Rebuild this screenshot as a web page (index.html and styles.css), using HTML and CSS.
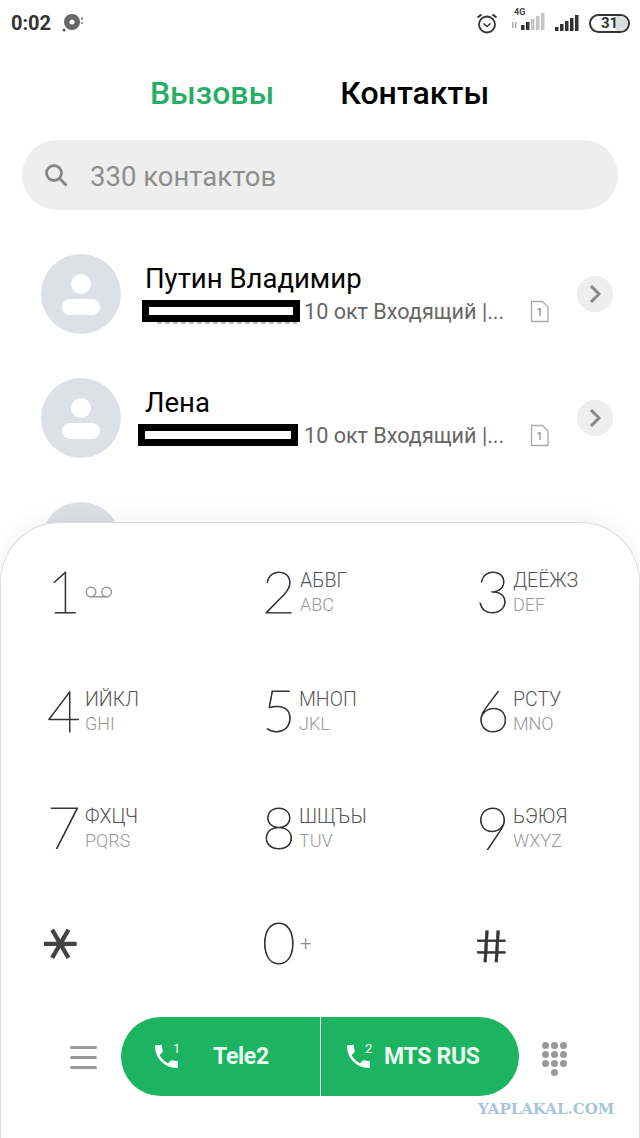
FILE: index.html
```html
<!DOCTYPE html>
<html lang="ru">
<head>
    <meta charset="UTF-8">
    <meta name="viewport" content="width=device-width, initial-scale=1.0">
    <title>Вызовы</title>
    <link rel="stylesheet" href="styles.css">
</head>
<body>
    <div class="screen">
        <div class="status-bar">
            <div class="status-left">
                <span class="clock">0:02</span>
                <svg class="disc-icon" width="22" height="20" viewBox="0 0 22 20">
                    <circle cx="10" cy="9" r="8" fill="#666"/>
                    <circle cx="10" cy="9" r="2.5" fill="#fff"/>
                    <circle cx="2" cy="17" r="1.5" fill="#555"/>
                    <rect x="19" y="4" width="2" height="3" fill="#999"/>
                    <rect x="19" y="9" width="2" height="2" fill="#999"/>
                </svg>
            </div>
            <div class="status-right">
                <svg class="alarm-icon" width="22" height="22" viewBox="0 0 22 22" fill="none" stroke="#333">
                    <circle cx="11" cy="12.5" r="8" stroke-width="1.8"/>
                    <path d="M7.5 11.5l3.5 3 3.5-3" stroke-width="1.6"/>
                    <path d="M1.5 5.5l4-3M20.500 5.500l-4-3" stroke-width="2"/>
                </svg>
                <div class="network">
                    <span class="net-label">4G</span>
                    <svg width="35" height="18" viewBox="0 0 35 18">
                        <rect x="0" y="9" width="1.500" height="6" fill="#aaa"/>
                        <rect x="3" y="9" width="1.500" height="6" fill="#aaa"/>
                        <rect x="9" y="12" width="3.500" height="5" fill="#333"/>
                        <rect x="14" y="9" width="3.500" height="8" fill="#333"/>
                        <rect x="19" y="6" width="3.500" height="11" fill="#c4c4c4"/>
                        <rect x="24" y="3" width="3.500" height="14" fill="#c4c4c4"/>
                        <rect x="29" y="0" width="3.500" height="17" fill="#c4c4c4"/>
                    </svg>
                </div>
                <svg class="signal-icon" width="25" height="18" viewBox="0 0 25 18" fill="#333">
                    <rect x="0" y="13" width="3.500" height="4"/>
                    <rect x="5" y="10" width="3.500" height="7"/>
                    <rect x="10" y="7" width="3.500" height="10"/>
                    <rect x="15" y="4" width="3.500" height="13"/>
                    <rect x="20" y="1" width="3.500" height="16"/>
                </svg>
                <div class="battery"><span class="battery-level"></span><span class="battery-text">31</span></div>
            </div>
        </div>

        <div class="tabs">
            <div class="tab tab-active">Вызовы</div>
            <div class="tab">Контакты</div>
        </div>

        <div class="search">
            <svg width="24" height="24" viewBox="0 0 24 24" fill="none" stroke="#888" stroke-width="2.800">
                <circle cx="10" cy="10" r="7.500"/>
                <path d="M15.500 15.500l7 7"/>
            </svg>
            <span class="search-text">330 контактов</span>
        </div>

        <div class="list">
            <div class="row">
                <svg class="avatar" width="80" height="80" viewBox="0 0 80 80">
                    <circle cx="40" cy="40" r="40" fill="#dde0e5"/>
                    <circle cx="40" cy="30" r="10" fill="#fff"/>
                    <rect x="21" y="45" width="38" height="16" rx="8" fill="#fff"/>
                </svg>
                <div class="info">
                    <div class="name">Путин Владимир</div>
                    <div class="sub">
                        <div class="redact redact-peek"></div>
                        <span class="sub-text">10 окт Входящий |...</span>
                        <svg class="sim" width="20" height="23" viewBox="0 0 20 23">
                            <path d="M1.500 1.500h11l5.500 5.500v14.500h-16.500z" fill="none" stroke="#aaa" stroke-width="1.300"/>
                            <text x="9.500" y="16" class="sim-num">1</text>
                        </svg>
                    </div>
                </div>
                <div class="more">
                    <svg width="14" height="20" viewBox="0 0 14 20" fill="none" stroke="#888" stroke-width="3"><path d="M3 2l8 8-8 8"/></svg>
                </div>
            </div>
            <div class="row">
                <svg class="avatar" width="80" height="80" viewBox="0 0 80 80">
                    <circle cx="40" cy="40" r="40" fill="#dde0e5"/>
                    <circle cx="40" cy="30" r="10" fill="#fff"/>
                    <rect x="21" y="45" width="38" height="16" rx="8" fill="#fff"/>
                </svg>
                <div class="info">
                    <div class="name">Лена</div>
                    <div class="sub">
                        <div class="redact redact-wide"></div>
                        <span class="sub-text">10 окт Входящий |...</span>
                        <svg class="sim" width="20" height="23" viewBox="0 0 20 23">
                            <path d="M1.500 1.500h11l5.500 5.500v14.500h-16.500z" fill="none" stroke="#aaa" stroke-width="1.300"/>
                            <text x="9.500" y="16" class="sim-num">1</text>
                        </svg>
                    </div>
                </div>
                <div class="more">
                    <svg width="14" height="20" viewBox="0 0 14 20" fill="none" stroke="#888" stroke-width="3"><path d="M3 2l8 8-8 8"/></svg>
                </div>
            </div>
            <div class="row">
                <svg class="avatar" width="80" height="80" viewBox="0 0 80 80">
                    <circle cx="40" cy="40" r="40" fill="#dde0e5"/>
                </svg>
                <div class="info">
                    <div class="name">С</div>
                </div>
            </div>
        </div>

        <div class="dialer">
            <div class="keys">
                <div class="key">
                    <span class="digit">1</span>
                    <svg class="voicemail" width="28" height="12" viewBox="0 0 28 12" fill="none" stroke="#999" stroke-width="1.500">
                        <circle cx="6" cy="6" r="4.800"/>
                        <circle cx="21.500" cy="6" r="4.800"/>
                        <path d="M6 10.800h15.500"/>
                    </svg>
                </div>
                <div class="key">
                    <span class="digit">2</span>
                    <div class="letters"><span class="letters-ru">АБВГ</span><span class="letters-en">ABC</span></div>
                </div>
                <div class="key">
                    <span class="digit">3</span>
                    <div class="letters"><span class="letters-ru">ДЕЁЖЗ</span><span class="letters-en">DEF</span></div>
                </div>
                <div class="key">
                    <span class="digit">4</span>
                    <div class="letters"><span class="letters-ru">ИЙКЛ</span><span class="letters-en">GHI</span></div>
                </div>
                <div class="key">
                    <span class="digit">5</span>
                    <div class="letters"><span class="letters-ru">МНОП</span><span class="letters-en">JKL</span></div>
                </div>
                <div class="key">
                    <span class="digit">6</span>
                    <div class="letters"><span class="letters-ru">РСТУ</span><span class="letters-en">MNO</span></div>
                </div>
                <div class="key">
                    <span class="digit">7</span>
                    <div class="letters"><span class="letters-ru">ФХЦЧ</span><span class="letters-en">PQRS</span></div>
                </div>
                <div class="key">
                    <span class="digit">8</span>
                    <div class="letters"><span class="letters-ru">ШЩЪЫ</span><span class="letters-en">TUV</span></div>
                </div>
                <div class="key">
                    <span class="digit">9</span>
                    <div class="letters"><span class="letters-ru">ЬЭЮЯ</span><span class="letters-en">WXYZ</span></div>
                </div>
                <div class="key">
                    <span class="digit symbol star">∗</span>
                </div>
                <div class="key">
                    <span class="digit">0</span>
                    <span class="plus">+</span>
                </div>
                <div class="key">
                    <span class="digit symbol hash">#</span>
                </div>
            </div>

            <div class="call-bar">
                <svg class="menu-icon" width="28" height="24" viewBox="0 0 28 24" fill="#999">
                    <rect x="0" y="1" width="27" height="3" rx="1.500"/>
                    <rect x="0" y="11" width="27" height="3" rx="1.500"/>
                    <rect x="0" y="21" width="27" height="3" rx="1.500"/>
                </svg>
                <div class="call-pill">
                    <div class="call-btn">
                        <span class="sim-phone">
                            <svg width="23" height="23" viewBox="3 3 18 18" fill="#fff"><path d="M6.620 10.790c1.440 2.830 3.760 5.140 6.590 6.590l2.200-2.200c.27-.27.67-.36 1.020-.24 1.120.37 2.330.57 3.570.57.55 0 1 .45 1 1V20c0 .55-.45 1-1 1-9.390 0-17-7.610-17-17 0-.55.45-1 1-1h3.500c.55 0 1 .45 1 1 0 1.250.2 2.450.57 3.570.11.35.03.74-.25 1.020l-2.200 2.200z"/></svg>
                            <sup class="sim-index">1</sup>
                        </span>
                        <span class="call-label call-label-first">Tele2</span>
                    </div>
                    <div class="call-btn">
                        <span class="sim-phone">
                            <svg width="23" height="23" viewBox="3 3 18 18" fill="#fff"><path d="M6.620 10.790c1.440 2.830 3.760 5.140 6.590 6.590l2.200-2.200c.27-.27.67-.36 1.020-.24 1.120.37 2.330.57 3.570.57.55 0 1 .45 1 1V20c0 .55-.45 1-1 1-9.390 0-17-7.610-17-17 0-.55.45-1 1-1h3.500c.55 0 1 .45 1 1 0 1.250.2 2.450.57 3.570.11.35.03.74-.25 1.020l-2.200 2.200z"/></svg>
                            <sup class="sim-index">2</sup>
                        </span>
                        <span class="call-label">MTS RUS</span>
                    </div>
                </div>
                <div class="pad-icon">
                    <i></i><i></i><i></i><i></i><i></i><i></i><i></i><i></i><i></i><i class="pad-last"></i>
                </div>
            </div>
        </div>

        <div class="watermark">YAPLAKAL.COM</div>
    </div>
</body>
</html>
```

FILE: styles.css
```css
* {
    margin: 0;
    padding: 0;
    box-sizing: border-box;
    font-family: 'Roboto', sans-serif;
}

body {
    background: #fff;
}

.screen {
    width: 640px;
    height: 1138px;
    position: relative;
    overflow: hidden;
    background: #fff;
}

/* Status bar */
.status-bar {
    height: 46px;
    padding: 0 10px 0 11px;
    display: flex;
    justify-content: space-between;
    align-items: center;
}

.status-left {
    display: flex;
    align-items: center;
    gap: 11px;
}

.clock {
    font-size: 20px;
    font-weight: 700;
    color: #333;
}

.status-right {
    display: flex;
    align-items: center;
}

.alarm-icon {
    margin-right: 14px;
}

.network {
    position: relative;
    margin-right: 8px;
    padding-top: 2px;
}

.net-label {
    position: absolute;
    left: 2px;
    top: -4px;
    font-size: 9px;
    font-weight: 700;
    color: #444;
}

.signal-icon {
    margin-right: 9px;
}

.battery {
    width: 41px;
    height: 19px;
    border: 2px solid #333;
    border-radius: 10px;
    position: relative;
    overflow: hidden;
    display: flex;
    justify-content: center;
    align-items: center;
}

.battery-level {
    position: absolute;
    top: 0;
    right: 0;
    bottom: 0;
    width: 12px;
    background: #ddd;
}

.battery-text {
    position: relative;
    font-size: 15px;
    font-weight: 700;
    color: #333;
}

/* Tabs */
.tabs {
    height: 94px;
    padding-right: 1px;
    display: flex;
    justify-content: center;
    align-items: center;
    gap: 66px;
}

.tab {
    font-size: 32px;
    font-weight: 500;
    color: #000;
}

.tab-active {
    color: #27ae66;
}

/* Search */
.search {
    height: 70px;
    margin: 0 22px;
    padding-left: 22px;
    background: #eee;
    border-radius: 35px;
    display: flex;
    align-items: center;
    gap: 22px;
}

.search-text {
    padding-top: 2px;
    font-size: 27.5px;
    color: #8e8e8e;
}

/* Contact list */
.list {
    padding-top: 22px;
}

.row {
    height: 124px;
    padding: 0 27px 0 41px;
    display: flex;
    align-items: center;
    gap: 24px;
}

.avatar {
    flex-shrink: 0;
}

.info {
    flex: 1;
}

.name {
    height: 30px;
    font-size: 27.5px;
    line-height: 30px;
    color: #000;
}

.sub {
    height: 26px;
    margin-top: 4px;
    display: flex;
    align-items: center;
}

.redact {
    width: 158px;
    height: 22px;
    margin-left: -3px;
    border: 7px solid #000;
    background: #fff;
    position: relative;
}

.redact-peek:after {
    content: "";
    position: absolute;
    left: 8px;
    right: -4px;
    top: 15px;
    height: 2px;
    background: repeating-linear-gradient(90deg, #bbb 0 5px, #fff 5px 8px);
}

.redact-wide {
    width: 160px;
    margin-left: -7px;
}

.sub-text {
    margin-left: 4px;
    font-size: 21.6px;
    color: #666;
}

.redact-wide + .sub-text {
    margin-left: 6px;
}

.sim {
    margin-left: auto;
    margin-right: 27px;
}

.sim-num {
    font-size: 11px;
    fill: #777;
    text-anchor: middle;
}

.more {
    width: 36px;
    height: 36px;
    border-radius: 50%;
    background: #eee;
    display: flex;
    justify-content: center;
    align-items: center;
    margin-left: -24px;
}

/* Dial pad sheet lies over the list */
.dialer {
    position: absolute;
    left: 0;
    right: 0;
    bottom: 0;
    height: 616px;
    background: #fff;
    border: 1px solid #dcdcdc;
    border-bottom: none;
    border-radius: 60px 60px 0 0;
    box-shadow: 0 -8px 20px rgba(0, 0, 0, 0.04);
    padding-top: 9px;
}

.keys {
    padding-left: 46px;
    display: grid;
    grid-template-columns: 215px 214px 1fr;
    grid-template-rows: 120px 118px 116px 114px;
}

.key {
    display: flex;
    align-items: center;
    gap: 8px;
}

.digit {
    width: 30px;
    margin-bottom: 2px;
    font-family: 'Lato', sans-serif;
    font-weight: 100;
    font-size: 58px;
    line-height: 60px;
    text-align: center;
    color: #333;
    -webkit-text-stroke: 0.8px #333;
}

.symbol {
    font-family: 'Roboto', sans-serif;
    font-weight: 400;
    -webkit-text-stroke: 0;
}

.star {
    margin-bottom: 12px;
    font-family: 'DejaVu Sans', sans-serif;
    font-size: 52px;
    color: #444;
    transform: rotate(90deg);
}

.hash {
    margin: 8px 0 0 -1px;
    font-size: 44px;
    font-weight: 300;
    transform: skewX(10deg) scaleX(1.25);
    -webkit-text-stroke: 0.4px #333;
}

.letters {
    display: flex;
    flex-direction: column;
    gap: 3px;
    margin-left: -1px;
}

.key:first-child + .key .letters,
.key:nth-child(3n+1) .letters {
    margin-left: 0;
}

.letters-ru {
    font-size: 19.5px;
    font-weight: 300;
    line-height: 22px;
    color: #555;
}

.letters-en {
    font-size: 18px;
    font-weight: 300;
    line-height: 19px;
    color: #999;
}

.plus {
    font-size: 20px;
    font-weight: 300;
    color: #888;
}

/* Call buttons */
.call-bar {
    margin-top: 17px;
    padding: 0 71px 0 69px;
    display: flex;
    align-items: center;
    justify-content: space-between;
}

.call-pill {
    width: 398px;
    height: 79px;
    border-radius: 40px;
    background: #1cb361;
    overflow: hidden;
    display: flex;
}

.call-btn {
    flex: 1;
    display: flex;
    align-items: center;
    color: #fff;
}

.call-btn:first-child {
    flex: none;
    width: 200px;
    padding-left: 34px;
    border-right: 1px solid #fff;
}

.call-btn:last-child {
    padding-left: 26px;
}

.sim-phone {
    position: relative;
    display: flex;
}

.sim-index {
    position: absolute;
    left: 18px;
    top: -3px;
    font-size: 13px;
    font-weight: 400;
    line-height: 14px;
}

.call-label {
    margin-left: 14px;
    font-size: 23px;
    font-weight: 700;
    letter-spacing: -0.3px;
    color: #eafbf2;
}

.call-label-first {
    margin-left: 35px;
}

.pad-icon {
    width: 26px;
    margin-top: 4px;
    display: grid;
    grid-template-columns: repeat(3, 7px);
    gap: 2px;
}

.pad-icon i {
    width: 7px;
    height: 7px;
    border-radius: 50%;
    background: #999;
}

.pad-last {
    grid-column: 2;
}

.watermark {
    position: absolute;
    left: 478px;
    top: 1100px;
    font-family: 'DejaVu Serif', serif;
    font-weight: 700;
    font-size: 15px;
    color: #a9c5dc;
}
```
